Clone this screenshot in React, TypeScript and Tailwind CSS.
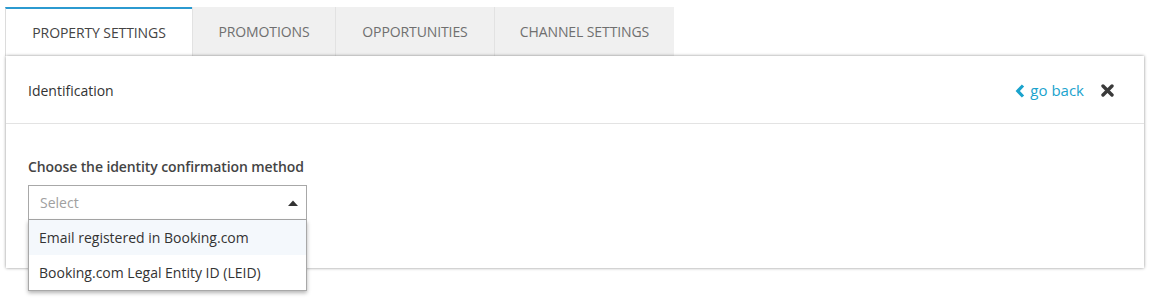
import React from "react";

const tabs = ["PROPERTY SETTINGS", "PROMOTIONS", "OPPORTUNITIES", "CHANNEL SETTINGS"];
const widths = ["w-[187px]", "w-[143px]", "w-[159px]", "w-[180px]"];

export default function App() {
  return (
    <div className="w-[1151px] h-[298px] bg-white font-['Open_Sans',sans-serif] text-[#333] overflow-hidden">
      <div className="pl-[5px] pr-[7px] pt-[7px]">
        <div className="flex h-[49px]">
          {tabs.map((t, i) =>
            i === 0 ? (
              <div
                key={t}
                className={`${widths[i]} flex items-center justify-center pb-[1px] bg-white border-t-2 border-t-[#2b9ad0] border-l border-l-[#dcdcdc] text-[14px] text-[#444] tracking-[-0.1px]`}
              >
                {t}
              </div>
            ) : (
              <div
                key={t}
                className={`${widths[i]} flex items-center justify-center pb-[1px] bg-[#f0f0f0] border-l border-l-[#e2e2e2] text-[14px] text-[#6f6f6f] tracking-[-0.1px]`}
              >
                {t}
              </div>
            )
          )}
        </div>
        <div className="relative bg-white ml-[1px] shadow-[0_0_3px_rgba(0,0,0,0.45)]">
          <div className="h-[68px] flex items-center justify-between pl-[22px] pr-[30px] pt-[2px] border-b border-[#e3e3e3]">
            <span className="text-[14px] text-[#333]">Identification</span>
            <div className="flex items-center gap-[17px]">
              <span className="flex items-center gap-[5px] text-[#1aa3cd] text-[15px]">
                <svg width="10" height="14" viewBox="0 0 10 14">
                  <path d="M8 1.5 L2.8 7 L8 12.5" fill="none" stroke="#1aa3cd" strokeWidth="3.2" />
                </svg>
                go back
              </span>
              <svg width="13" height="13" viewBox="0 0 13 13">
                <path d="M2 2 L11 11 M11 2 L2 11" stroke="#3a3a3a" strokeWidth="3.4" strokeLinecap="round" />
              </svg>
            </div>
          </div>
          <div className="pl-[22px] pt-[33px] pb-[48px]">
            <div className="text-[14px] font-semibold text-[#444] leading-[20px] mb-[8px] tracking-[-0.1px]">
              Choose the identity confirmation method
            </div>
            <div className="relative w-[279px]">
              <div className="h-[35px] border border-[#a8a8a8] flex items-center justify-between pl-[11px] pr-[8px] text-[14px] text-[#a0a0a0]">
                <span>Select</span>
                <svg width="10" height="6" viewBox="0 0 10 6">
                  <path d="M0 6 L5 0.5 L10 6 Z" fill="#333" />
                </svg>
              </div>
              <div className="absolute left-0 right-0 top-[35px] bg-white border border-t-0 border-[#a8a8a8] shadow-[0_2px_4px_rgba(0,0,0,0.3)] z-10">
                <div className="h-[35px] flex items-center pl-[10px] bg-[#f4f8fc] text-[14px] text-[#333]">
                  Email registered in Booking.com
                </div>
                <div className="h-[35px] flex items-center pl-[10px] text-[14px] text-[#333]">
                  Booking.com Legal Entity ID (LEID)
                </div>
              </div>
            </div>
          </div>
        </div>
      </div>
    </div>
  );
}
